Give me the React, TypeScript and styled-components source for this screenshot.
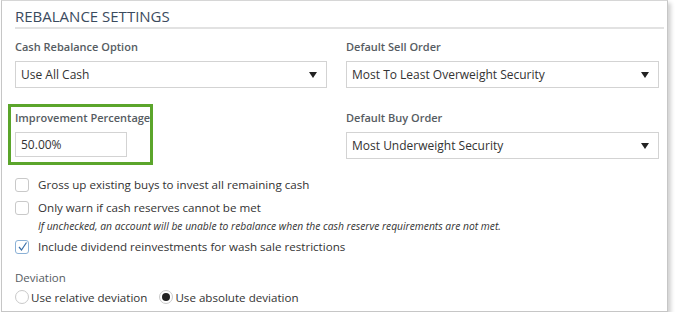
import React from "react";
import styled, { createGlobalStyle } from "styled-components";

const GlobalStyle = createGlobalStyle`
  body {
    margin: 0;
    background: #ffffff;
    font-family: "Open Sans", "Noto Sans", sans-serif;
  }
`;

const Panel = styled.div`
  width: 667px;
  height: 312px;
  margin-left: 1px;
  padding: 5px 3px 0 13px;
  box-sizing: border-box;
  background: #fff;
  border: 1px solid #c6c6c6;
  border-top-color: #d6d6d6;
  box-shadow: 3px 3px 4px rgba(0, 0, 0, 0.18);
`;

const Title = styled.div`
  font-size: 15px;
  line-height: 20px;
  color: #3b4b5e;
  padding-bottom: 1px;
  border-bottom: 2px solid #e2e2e2;
`;

const Grid = styled.div`
  display: grid;
  grid-template-columns: 312px 313px;
  column-gap: 19px;
  row-gap: 21px;
  margin-top: 9px;
`;

const Field = styled.div<{ $highlight?: boolean }>`
  display: flex;
  flex-direction: column;
  ${(p) =>
    p.$highlight
      ? `
    box-sizing: border-box;
    width: 145px;
    margin: -5px 0 -6px -7px;
    padding: 2px 0 5px 4px;
    border: 3px solid #5ba52b;
  `
      : ""}
`;

const Label = styled.div`
  font-size: 11px;
  line-height: 18px;
  font-weight: 600;
  color: #565c62;
  white-space: nowrap;
  margin-bottom: 5px;
`;

const SelectBox = styled.div`
  display: flex;
  align-items: center;
  justify-content: space-between;
  height: 25px;
  padding: 0 9px 0 5px;
  border: 1px solid #d3d3d3;
  font-size: 12px;
  color: #333;
`;

const Arrow = styled.span`
  width: 0;
  height: 0;
  border-left: 4px solid transparent;
  border-right: 4px solid transparent;
  border-top: 6px solid #222;
`;

const TextInput = styled.div`
  width: 100px;
  height: 23px;
  padding: 0 5px;
  display: flex;
  align-items: center;
  border: 1px solid #d3d3d3;
  font-size: 12px;
  color: #333;
`;

const Options = styled.div`
  margin-top: 14px;
  display: flex;
  flex-direction: column;
`;

const CheckRow = styled.div`
  display: flex;
  align-items: center;
  height: 23px;
  font-size: 11.6px;
  color: #333;
`;

const Box = styled.span<{ $checked?: boolean }>`
  box-sizing: border-box;
  width: 14px;
  height: 14px;
  border: 1px solid ${(p) => (p.$checked ? "#8bb1d6" : "#c9c9c9")};
  border-radius: 3px;
  margin-right: 9px;
  display: flex;
  align-items: center;
  justify-content: center;
`;

const Note = styled.div`
  font-size: 10.3px;
  font-style: italic;
  color: #333;
  padding-left: 23px;
  line-height: 15px;
  margin-bottom: 1px;
`;

const DevLabel = styled.div`
  font-size: 11.5px;
  color: #565c62;
  margin-top: 11px;
  line-height: 18px;
`;

const RadioRow = styled.div`
  display: flex;
  align-items: center;
  height: 20px;
  gap: 12px;
  font-size: 11.6px;
  color: #333;
`;

const Radio = styled.label`
  display: flex;
  align-items: center;
`;

const Dot = styled.span<{ $on?: boolean }>`
  box-sizing: border-box;
  width: 14px;
  height: 14px;
  border-radius: 50%;
  border: 1px solid #c9c9c9;
  margin-right: 2px;
  display: flex;
  align-items: center;
  justify-content: center;
  &::after {
    content: "";
    width: 8px;
    height: 8px;
    border-radius: 50%;
    background: ${(p) => (p.$on ? "#222" : "transparent")};
  }
`;

const Check = () => (
  <svg width="11" height="11" viewBox="0 0 11 11">
    <path d="M2 6 L4.5 9 L9.5 1.5" fill="none" stroke="#3a6fa8" strokeWidth="1.2" />
  </svg>
);

export default function App() {
  return (
    <>
      <GlobalStyle />
      <Panel>
        <Title>REBALANCE SETTINGS</Title>
        <Grid>
          <Field>
            <Label>Cash Rebalance Option</Label>
            <SelectBox>
              Use All Cash
              <Arrow />
            </SelectBox>
          </Field>
          <Field>
            <Label>Default Sell Order</Label>
            <SelectBox>
              Most To Least Overweight Security
              <Arrow />
            </SelectBox>
          </Field>
          <Field $highlight>
            <Label>Improvement Percentage</Label>
            <TextInput>50.00%</TextInput>
          </Field>
          <Field>
            <Label>Default Buy Order</Label>
            <SelectBox>
              Most Underweight Security
              <Arrow />
            </SelectBox>
          </Field>
        </Grid>
        <Options>
          <CheckRow>
            <Box />
            Gross up existing buys to invest all remaining cash
          </CheckRow>
          <CheckRow>
            <Box />
            Only warn if cash reserves cannot be met
          </CheckRow>
          <Note>
            If unchecked, an account will be unable to rebalance when the cash reserve requirements are not met.
          </Note>
          <CheckRow>
            <Box $checked>
              <Check />
            </Box>
            Include dividend reinvestments for wash sale restrictions
          </CheckRow>
        </Options>
        <DevLabel>Deviation</DevLabel>
        <RadioRow>
          <Radio>
            <Dot />
            Use relative deviation
          </Radio>
          <Radio>
            <Dot $on />
            Use absolute deviation
          </Radio>
        </RadioRow>
      </Panel>
    </>
  );
}
